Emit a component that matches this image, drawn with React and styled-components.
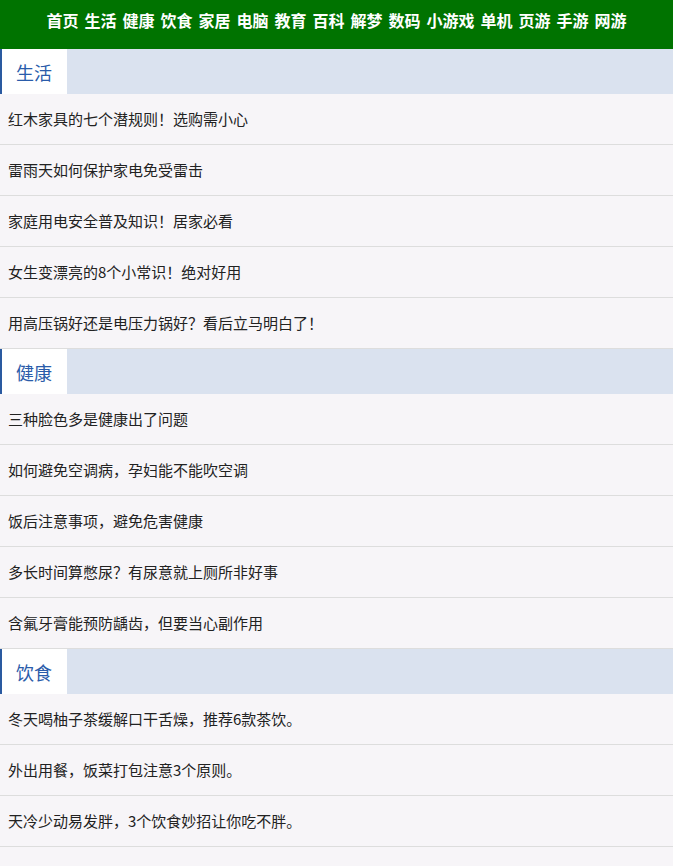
import styled, { createGlobalStyle } from 'styled-components'

const GlobalStyle = createGlobalStyle`
  body {
    margin: 0;
    background: #f7f5f8;
    font-family: "Microsoft YaHei", "Noto Sans CJK SC", "Liberation Sans", sans-serif;
  }
`

const Nav = styled.div`
  height: 49px;
  background: #007300;
  display: flex;
  justify-content: center;
  align-items: center;
  gap: 6px;
  padding-bottom: 9px;
  box-sizing: border-box;
`

const NavLink = styled.a`
  color: #fff;
  font-size: 16px;
  font-weight: bold;
  text-decoration: none;
`

const SectionHead = styled.div`
  height: 45px;
  background: #dae2ef;
  display: flex;
`

const Tab = styled.div`
  width: 67px;
  background: #fff;
  border-left: 2px solid #2a5aa0;
  color: #2a5caa;
  font-size: 18px;
  display: flex;
  align-items: center;
  padding-left: 14px;
  box-sizing: border-box;
`

const Row = styled.a`
  display: flex;
  align-items: center;
  height: 51px;
  padding-left: 8px;
  padding-bottom: 2px;
  border-bottom: 1px solid #dddddd;
  box-sizing: border-box;
  color: #222;
  font-size: 15px;
  text-decoration: none;
  background: #f7f5f8;
`

const nav = ['首页', '生活', '健康', '饮食', '家居', '电脑', '教育', '百科', '解梦', '数码', '小游戏', '单机', '页游', '手游', '网游']

const sections = [
  {
    title: '生活',
    items: [
      '红木家具的七个潜规则！选购需小心',
      '雷雨天如何保护家电免受雷击',
      '家庭用电安全普及知识！居家必看',
      '女生变漂亮的8个小常识！绝对好用',
      '用高压锅好还是电压力锅好？看后立马明白了！',
    ],
  },
  {
    title: '健康',
    items: [
      '三种脸色多是健康出了问题',
      '如何避免空调病，孕妇能不能吹空调',
      '饭后注意事项，避免危害健康',
      '多长时间算憋尿？有尿意就上厕所非好事',
      '含氟牙膏能预防龋齿，但要当心副作用',
    ],
  },
  {
    title: '饮食',
    items: [
      '冬天喝柚子茶缓解口干舌燥，推荐6款茶饮。',
      '外出用餐，饭菜打包注意3个原则。',
      '天冷少动易发胖，3个饮食妙招让你吃不胖。',
      '',
    ],
  },
]

export default function App() {
  return (
    <>
      <GlobalStyle />
      <Nav>
        {nav.map((n) => (
          <NavLink key={n}>{n}</NavLink>
        ))}
      </Nav>
      {sections.map((s) => (
        <div key={s.title}>
          <SectionHead>
            <Tab>{s.title}</Tab>
          </SectionHead>
          {s.items.map((t, i) => (
            <Row key={i}>{t}</Row>
          ))}
        </div>
      ))}
    </>
  )
}
